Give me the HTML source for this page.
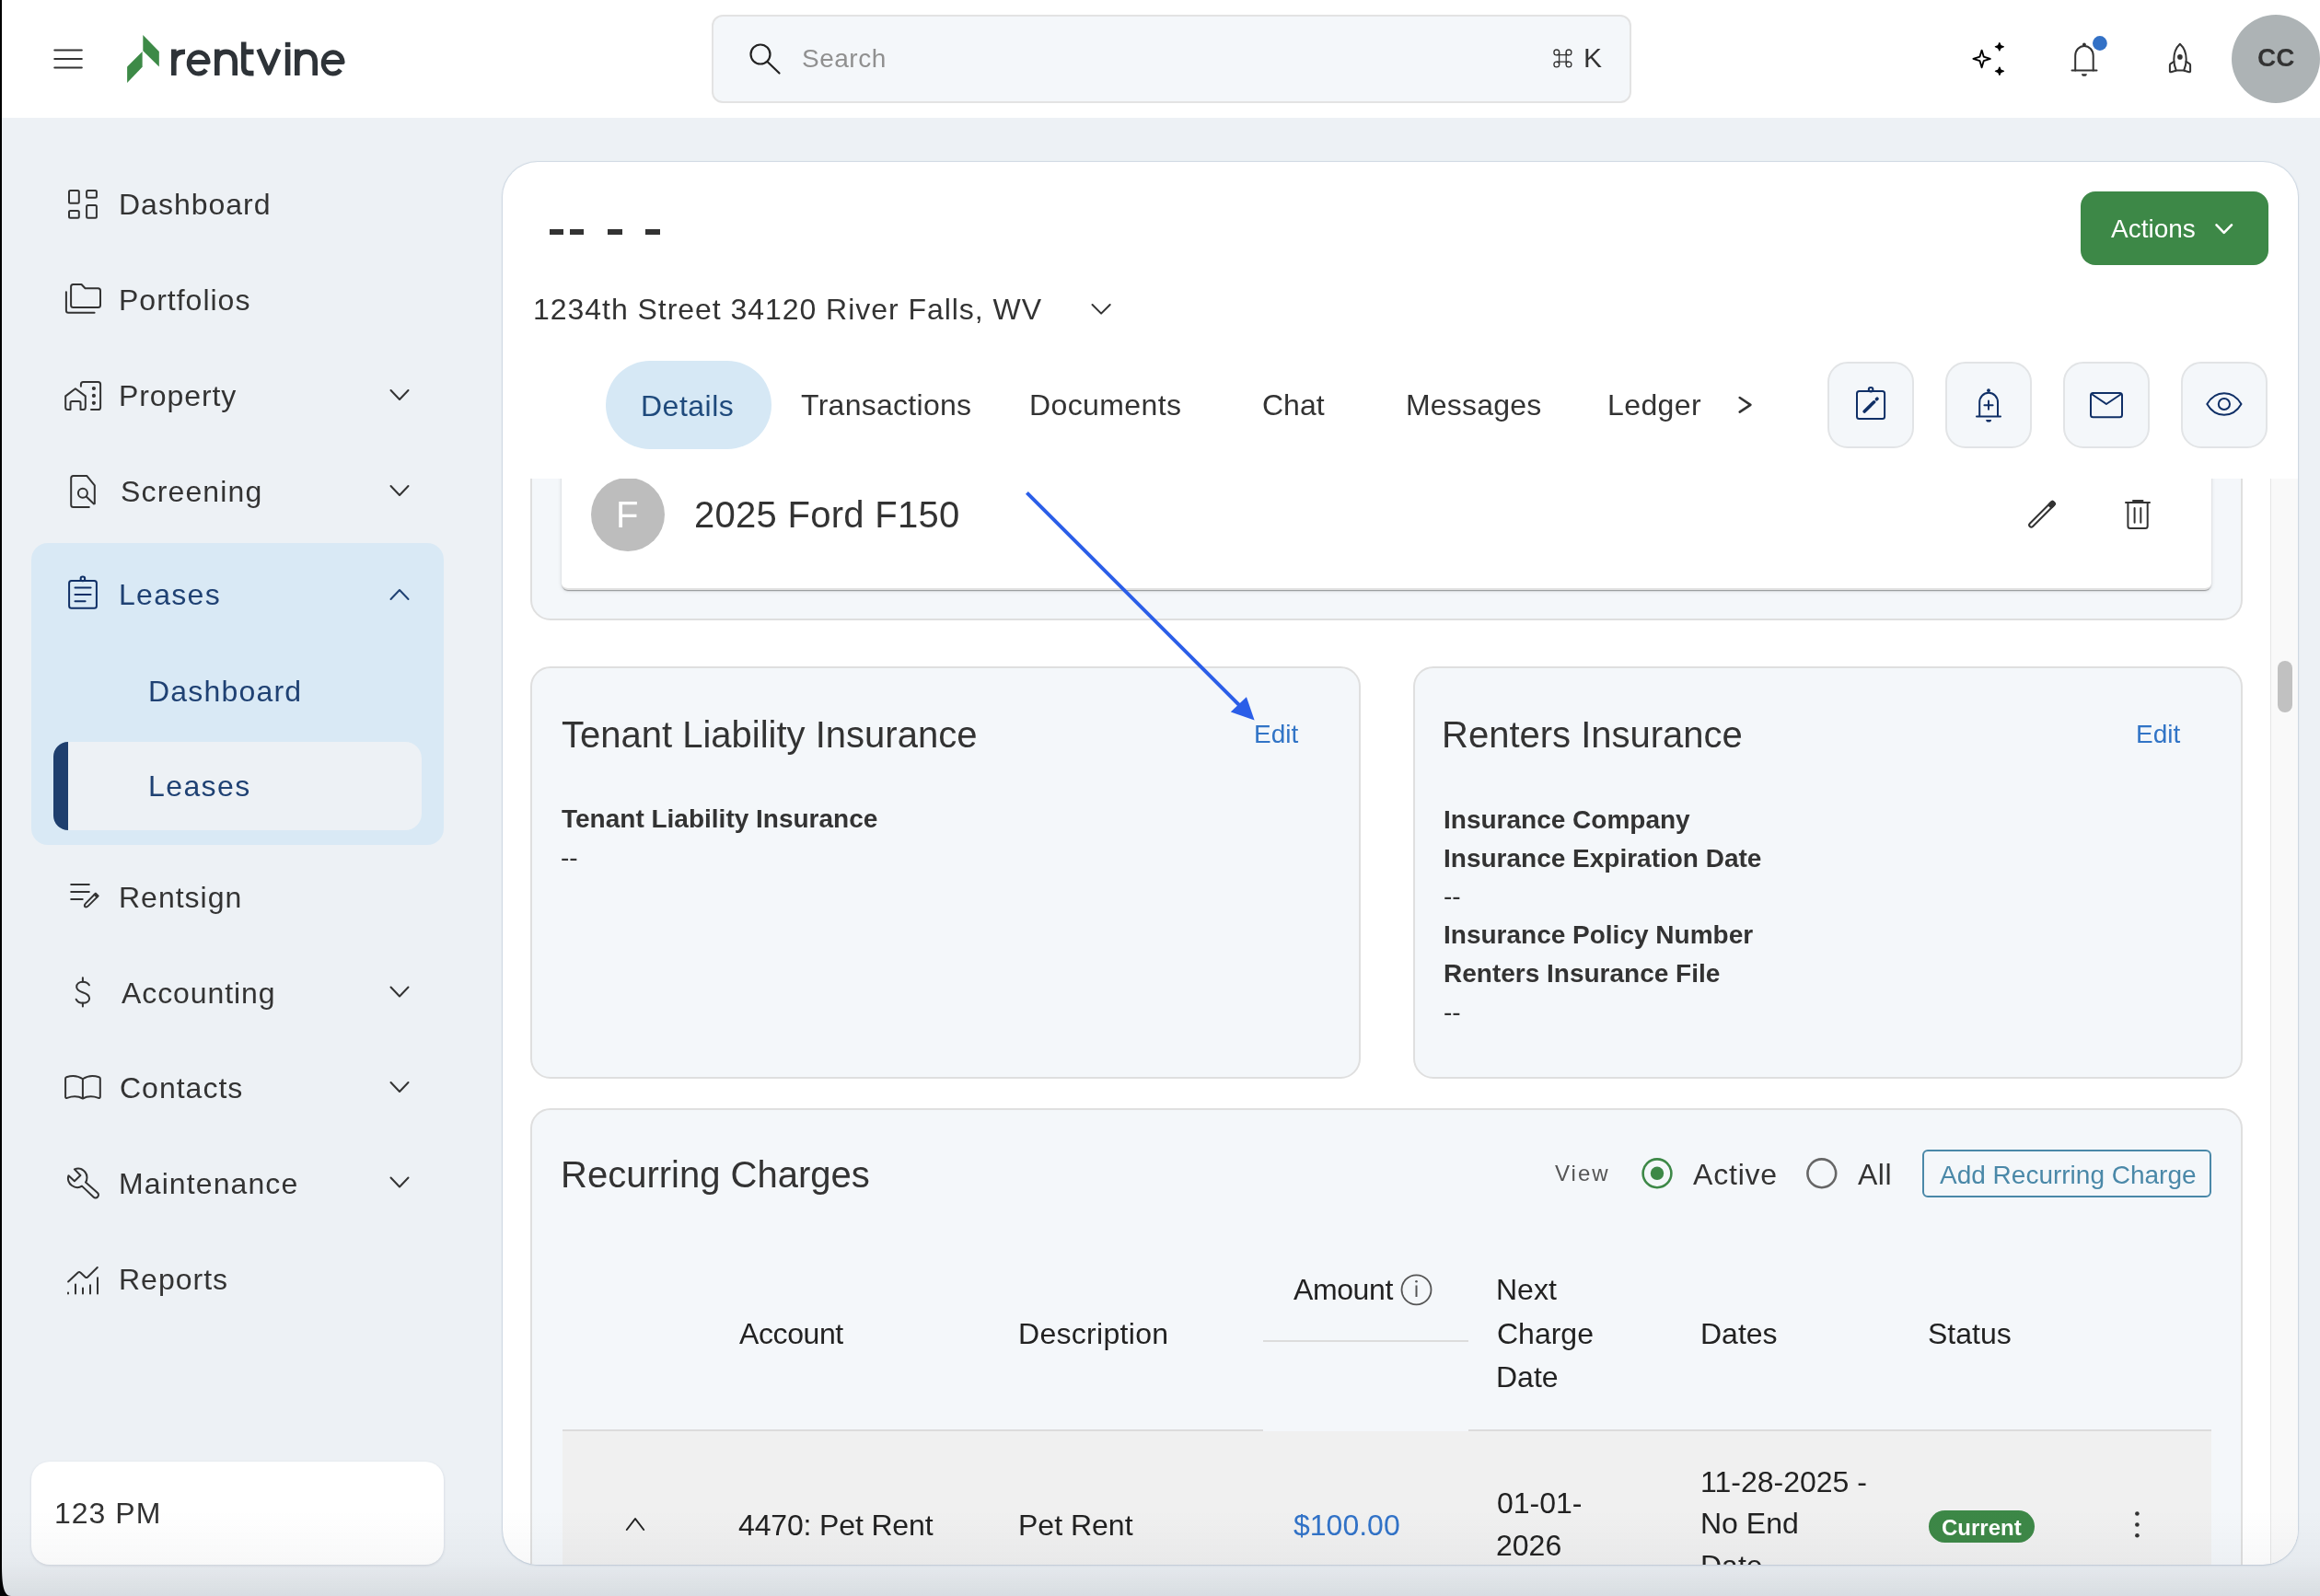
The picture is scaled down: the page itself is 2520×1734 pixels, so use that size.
<!DOCTYPE html>
<html><head><meta charset="utf-8"><title>Rentvine</title>
<style>
html,body{margin:0;padding:0;}
body{width:2520px;height:1734px;position:relative;overflow:hidden;background:#edf1f5;
font-family:"Liberation Sans",sans-serif;}
.t{position:absolute;white-space:nowrap;line-height:1;will-change:transform;}
svg{position:absolute;overflow:visible;}
</style></head><body>

<div style="position:absolute;left:0px;top:0px;width:2520px;height:128px;background:#fff;"></div>
<div style="position:absolute;left:773px;top:16px;width:999px;height:96px;box-sizing:border-box;border:2px solid #e3e3e3;background:#f4f7fa;border-radius:12px;"></div>
<div style="position:absolute;left:34px;top:590px;width:448px;height:328px;background:#d9e9f5;border-radius:18px;"></div>
<div style="position:absolute;left:58px;top:806px;width:400px;height:96px;background:#edf1f5;border-radius:18px;overflow:hidden;"></div>
<div style="position:absolute;left:58px;top:806px;width:16px;height:96px;background:#1f3f6e;border-radius:18px 0 0 18px;"></div>
<div style="position:absolute;left:34px;top:1588px;width:448px;height:112px;background:#fff;border-radius:20px;box-shadow:0 1px 3px rgba(60,80,110,.18);"></div>
<div class="t" style="left:129.4px;top:205.9px;font-size:32px;color:#333;font-weight:400;letter-spacing:1.0px;">Dashboard</div>
<div class="t" style="left:129.4px;top:309.9px;font-size:32px;color:#333;font-weight:400;letter-spacing:1.0px;">Portfolios</div>
<div class="t" style="left:129.4px;top:413.9px;font-size:32px;color:#333;font-weight:400;letter-spacing:0.9px;">Property</div>
<div class="t" style="left:130.5px;top:517.9px;font-size:32px;color:#333;font-weight:400;letter-spacing:1.15px;">Screening</div>
<div class="t" style="left:129.4px;top:958.9px;font-size:32px;color:#333;font-weight:400;letter-spacing:1.0px;">Rentsign</div>
<div class="t" style="left:131.9px;top:1062.9px;font-size:32px;color:#333;font-weight:400;letter-spacing:0.9px;">Accounting</div>
<div class="t" style="left:130.4px;top:1166.4px;font-size:32px;color:#333;font-weight:400;letter-spacing:1.0px;">Contacts</div>
<div class="t" style="left:129.4px;top:1269.9px;font-size:32px;color:#333;font-weight:400;letter-spacing:1.1px;">Maintenance</div>
<div class="t" style="left:129.4px;top:1373.9px;font-size:32px;color:#333;font-weight:400;letter-spacing:1.0px;">Reports</div>
<div class="t" style="left:128.9px;top:629.9px;font-size:32px;color:#1f4173;font-weight:400;letter-spacing:1.3px;">Leases</div>
<div class="t" style="left:160.9px;top:734.9px;font-size:32px;color:#1f4173;font-weight:400;letter-spacing:1.2px;">Dashboard</div>
<div class="t" style="left:160.9px;top:837.9px;font-size:32px;color:#1f4173;font-weight:400;letter-spacing:1.4px;">Leases</div>
<div class="t" style="left:58.6px;top:1627.9px;font-size:32px;color:#333;font-weight:400;letter-spacing:1.0px;">123 PM</div>
<div style="position:absolute;left:546px;top:176px;width:1950px;height:1524px;background:#fff;border-radius:38px;box-shadow:0 0 1px 1px rgba(120,145,175,.22),0 1px 3px rgba(120,145,175,.18);"></div>
<div style="position:absolute;left:596.9px;top:249.3px;width:15.200000000000045px;height:5.5px;background:#333;"></div>
<div style="position:absolute;left:619.1px;top:249.3px;width:15.399999999999977px;height:5.5px;background:#333;"></div>
<div style="position:absolute;left:660.1px;top:249.3px;width:15.799999999999955px;height:5.5px;background:#333;"></div>
<div style="position:absolute;left:701px;top:249.3px;width:15.899999999999977px;height:5.5px;background:#333;"></div>
<div class="t" style="left:578.6px;top:319.9px;font-size:32px;color:#333;font-weight:400;letter-spacing:0.96px;">1234th Street 34120 River Falls, WV</div>
<div style="position:absolute;left:658px;top:392px;width:180px;height:96px;background:#d6e8f5;border-radius:48px;"></div>
<div class="t" style="left:696.4px;top:424.6px;font-size:32px;color:#1f4a7c;font-weight:400;letter-spacing:0.5px;">Details</div>
<div class="t" style="left:870.1px;top:424.1px;font-size:32px;color:#333;font-weight:400;letter-spacing:0.28px;">Transactions</div>
<div class="t" style="left:1118.2px;top:424.1px;font-size:32px;color:#333;font-weight:400;letter-spacing:0.4px;">Documents</div>
<div class="t" style="left:1371.0px;top:424.1px;font-size:32px;color:#333;font-weight:400;letter-spacing:0px;">Chat</div>
<div class="t" style="left:1527.4px;top:424.1px;font-size:32px;color:#333;font-weight:400;letter-spacing:0.2px;">Messages</div>
<div class="t" style="left:1746.4px;top:424.1px;font-size:32px;color:#333;font-weight:400;letter-spacing:0.4px;">Ledger</div>
<div style="position:absolute;left:2260px;top:208px;width:204px;height:80px;background:#3d8847;border-radius:16px;"></div>
<div class="t" style="left:2292.9px;top:234.6px;font-size:28px;color:#fff;font-weight:400;letter-spacing:0px;">Actions</div>
<div style="position:absolute;left:1985px;top:392.7px;width:94px;height:94.30000000000001px;box-sizing:border-box;border:2px solid #e2e4e6;background:#f4f7fa;border-radius:22px;"></div>
<div style="position:absolute;left:2112.8px;top:392.7px;width:94.0px;height:94.30000000000001px;box-sizing:border-box;border:2px solid #e2e4e6;background:#f4f7fa;border-radius:22px;"></div>
<div style="position:absolute;left:2240.7px;top:392.7px;width:94.0px;height:94.30000000000001px;box-sizing:border-box;border:2px solid #e2e4e6;background:#f4f7fa;border-radius:22px;"></div>
<div style="position:absolute;left:2368.6px;top:392.7px;width:94.0px;height:94.30000000000001px;box-sizing:border-box;border:2px solid #e2e4e6;background:#f4f7fa;border-radius:22px;"></div>
<div style="position:absolute;left:546px;top:520px;width:1950px;height:1180px;overflow:hidden;border-radius:0 0 38px 38px;">
<div style="position:absolute;left:30px;top:-220px;width:1860px;height:374px;box-sizing:border-box;border:2px solid #dfdfdf;background:#f4f7fa;border-radius:22px;"></div>
<div style="position:absolute;left:64px;top:-220px;width:1792px;height:341px;background:#fff;border-radius:7px;border-bottom:2px solid #e2e2e2;box-sizing:border-box;box-shadow:0 2px 1px -1px rgba(0,0,0,.28),0 1px 2px 0 rgba(0,0,0,.12),0 1px 5px 0 rgba(0,0,0,.10);"></div>
<div style="position:absolute;left:96px;top:-1px;width:80px;height:80px;background:#bdbdbd;border-radius:50%;"></div>
<div class="t" style="left:122.7px;top:19.4px;font-size:40px;color:#fff;font-weight:400;letter-spacing:0px;">F</div>
<div class="t" style="left:208.0px;top:19.4px;font-size:40px;color:#333;font-weight:400;letter-spacing:0.28px;">2025 Ford F150</div>
<div style="position:absolute;left:30px;top:203.5px;width:902px;height:448.5px;box-sizing:border-box;border:2px solid #dfdfdf;background:#f4f7fa;border-radius:22px;"></div>
<div style="position:absolute;left:989px;top:203.5px;width:901px;height:448.5px;box-sizing:border-box;border:2px solid #dfdfdf;background:#f4f7fa;border-radius:22px;"></div>
<div class="t" style="left:63.7px;top:257.5px;font-size:40px;color:#333;font-weight:400;letter-spacing:0px;">Tenant Liability Insurance</div>
<div class="t" style="left:816.0px;top:263.7px;font-size:28px;color:#3174c6;font-weight:400;letter-spacing:0px;">Edit</div>
<div class="t" style="left:64.3px;top:356.1px;font-size:28px;color:#333;font-weight:700;letter-spacing:0px;">Tenant Liability Insurance</div>
<div class="t" style="left:63.4px;top:397.8px;font-size:28px;color:#333;font-weight:400;letter-spacing:0px;">--</div>
<div class="t" style="left:1020.2px;top:257.8px;font-size:40px;color:#333;font-weight:400;letter-spacing:0px;">Renters Insurance</div>
<div class="t" style="left:1774.3px;top:263.7px;font-size:28px;color:#3174c6;font-weight:400;letter-spacing:0px;">Edit</div>
<div class="t" style="left:1021.6px;top:357.0px;font-size:28px;color:#333;font-weight:700;letter-spacing:0px;">Insurance Company</div>
<div class="t" style="left:1021.6px;top:398.6px;font-size:28px;color:#333;font-weight:700;letter-spacing:0px;">Insurance Expiration Date</div>
<div class="t" style="left:1022.3px;top:440.3px;font-size:28px;color:#333;font-weight:400;letter-spacing:0px;">--</div>
<div class="t" style="left:1021.6px;top:482.3px;font-size:28px;color:#333;font-weight:700;letter-spacing:0px;">Insurance Policy Number</div>
<div class="t" style="left:1021.6px;top:524.3px;font-size:28px;color:#333;font-weight:700;letter-spacing:0px;">Renters Insurance File</div>
<div class="t" style="left:1022.3px;top:566.3px;font-size:28px;color:#333;font-weight:400;letter-spacing:0px;">--</div>
<div style="position:absolute;left:30px;top:683.5px;width:1860px;height:596.5px;box-sizing:border-box;border:2px solid #dfdfdf;background:#f4f7fa;border-radius:22px;"></div>
<div class="t" style="left:62.6px;top:735.5px;font-size:40px;color:#333;font-weight:400;letter-spacing:0px;">Recurring Charges</div>
<div class="t" style="left:1143.4px;top:743.1px;font-size:24px;color:#555;font-weight:400;letter-spacing:2px;">View</div>
<div class="t" style="left:1292.9px;top:739.6px;font-size:32px;color:#333;font-weight:400;letter-spacing:0.8px;">Active</div>
<div class="t" style="left:1471.9px;top:739.6px;font-size:32px;color:#333;font-weight:400;letter-spacing:0.5px;">All</div>
<div style="position:absolute;left:1541.8px;top:728.8px;width:313.9000000000001px;height:52.60000000000002px;box-sizing:border-box;border:2px solid #4a88a8;border-radius:6px;"></div>
<div class="t" style="left:1560.7px;top:743.0px;font-size:28px;color:#4a88a8;font-weight:400;letter-spacing:0px;">Add Recurring Charge</div>
<div class="t" style="left:256.9px;top:913.3px;font-size:32px;color:#222;font-weight:400;letter-spacing:-0.4px;">Account</div>
<div class="t" style="left:559.9px;top:913.3px;font-size:32px;color:#222;font-weight:400;letter-spacing:0.3px;">Description</div>
<div class="t" style="left:858.9px;top:864.7px;font-size:32px;color:#222;font-weight:400;letter-spacing:-0.4px;">Amount</div>
<div class="t" style="left:1079.4px;top:865.2px;font-size:32px;color:#222;font-weight:400;letter-spacing:0px;">Next</div>
<div class="t" style="left:1080.4px;top:912.7px;font-size:32px;color:#222;font-weight:400;letter-spacing:0px;">Charge</div>
<div class="t" style="left:1079.4px;top:960.1px;font-size:32px;color:#222;font-weight:400;letter-spacing:0px;">Date</div>
<div class="t" style="left:1301.2px;top:912.7px;font-size:32px;color:#222;font-weight:400;letter-spacing:0px;">Dates</div>
<div class="t" style="left:1547.5px;top:912.7px;font-size:32px;color:#222;font-weight:400;letter-spacing:0px;">Status</div>
<div style="position:absolute;left:826px;top:936.4px;width:223px;height:2.0px;background:#dcdcdc;"></div>
<div style="position:absolute;left:65px;top:1032.6px;width:761px;height:2.0px;background:#dcdcdc;"></div>
<div style="position:absolute;left:1049px;top:1032.6px;width:807px;height:2.0px;background:#dcdcdc;"></div>
<div style="position:absolute;left:65px;top:1034.6px;width:1791px;height:245.4000000000001px;background:#f0f0f0;"></div>
<div class="t" style="left:256.3px;top:1120.5px;font-size:32px;color:#222;font-weight:400;letter-spacing:-0.15px;">4470: Pet Rent</div>
<div class="t" style="left:559.7px;top:1120.5px;font-size:32px;color:#222;font-weight:400;letter-spacing:0px;">Pet Rent</div>
<div class="t" style="left:858.5px;top:1120.5px;font-size:32px;color:#3273c8;font-weight:400;letter-spacing:0px;">$100.00</div>
<div class="t" style="left:1079.8px;top:1097.2px;font-size:32px;color:#222;font-weight:400;letter-spacing:0px;">01-01-</div>
<div class="t" style="left:1079.4px;top:1142.7px;font-size:32px;color:#222;font-weight:400;letter-spacing:0px;">2026</div>
<div class="t" style="left:1301.2px;top:1073.6px;font-size:32px;color:#222;font-weight:400;letter-spacing:0px;">11-28-2025 -</div>
<div class="t" style="left:1301.0px;top:1119.1px;font-size:32px;color:#222;font-weight:400;letter-spacing:0px;">No End</div>
<div class="t" style="left:1301.0px;top:1164.6px;font-size:32px;color:#222;font-weight:400;letter-spacing:0px;">Date</div>
<div style="position:absolute;left:1549px;top:1121.4px;width:114.70000000000005px;height:35.09999999999991px;background:#3d8847;border-radius:18px;"></div>
<div class="t" style="left:1562.5px;top:1128.0px;font-size:24px;color:#fff;font-weight:700;letter-spacing:0px;">Current</div>
<div style="position:absolute;left:1920px;top:0px;width:30px;height:1180px;background:#f9f9f9;border-left:1px solid #e6e6e6;box-sizing:border-box;"></div>
<div style="position:absolute;left:1928px;top:198px;width:16px;height:56px;background:#c1c1c1;border-radius:8px;"></div>
</div>
<svg width="2520" height="1734" style="left:0;top:0;"><g stroke="#333" stroke-width="2.1" stroke-linecap="round"><path d="M59.3 54.5H88.8M59.3 64H88.8M59.3 73.5H88.8"/></g><g fill="#3d8a47"><path d="M155.3 37.9L172.8 56.1V72.4L155.3 55.3Z"/><path d="M154.6 56V72.8L138.1 89.9V72.4Z"/></g><g fill="none" stroke="#2e3338" stroke-width="5.6" stroke-linecap="butt" stroke-linejoin="round"><path d="M188.8 82V53.5M188.8 67C188.8 59.5 193.5 56.3 201 56.3"/><path d="M205 67.4H226.1A10.45 11.7 0 1 0 223.8 75.8" stroke-width="5"/><path d="M235.8 82V53.5M235.8 67C235.8 60 240 56.3 245.5 56.3C251.5 56.3 255.2 60 255.2 67V82"/><path d="M264.7 45.5V73C264.7 77.6 267 79.6 270.8 79.6H275.5M261.9 56.4H275.5" /><path d="M281 53.5L291.85 79L302.7 53.5"/><path d="M312.6 82V53.5"/><path d="M312.6 45.8V51.2"/><path d="M322.8 82V53.5M322.8 67C322.8 60 327 56.3 332.5 56.3C338.5 56.3 342.2 60 342.2 67V82"/><path d="M351 67.4H372.1A10.45 11.7 0 1 0 369.8 75.8" stroke-width="5"/></g><g fill="none" stroke="#222" stroke-width="2.2" stroke-linecap="round"><circle cx="826" cy="59" r="10.5"/><path d="M834 67.5L846.5 79.5"/></g><g fill="none" stroke="#333" stroke-width="1.3"><path d="M1693.6 56.9V70.1M1701.2 56.9V70.1M1690.8 59.7H1704M1690.8 67.1H1704"/><circle cx="1690.8" cy="56.9" r="2.9"/><circle cx="1704" cy="56.9" r="2.9"/><circle cx="1690.8" cy="70" r="2.9"/><circle cx="1704" cy="70" r="2.9"/></g><path d="M2152.6 54.6L2154.7 61.6L2161.8 63.9L2154.7 66.2L2152.6 73.3L2150.5 66.2L2143.4 63.9L2150.5 61.6Z" fill="none" stroke="#000" stroke-width="1.9" stroke-linejoin="round"/><path d="M2171.8 46.6L2173.1 49.5L2176.4 50.8L2173.1 52.1L2171.8 55L2170.5 52.1L2167.3 50.8L2170.5 49.5Z" fill="#000" stroke="#000" stroke-width="1.2" stroke-linejoin="round"/><path d="M2171.9 73.1L2173.2 76L2176.5 77.3L2173.2 78.6L2171.9 81.4L2170.6 78.6L2167.4 77.3L2170.6 76Z" fill="#000" stroke="#000" stroke-width="1.2" stroke-linejoin="round"/><g fill="none" stroke="#333" stroke-width="2" stroke-linecap="round" stroke-linejoin="round"><path d="M2254.2 76.5V60.5A9.7 10.5 0 0 1 2273.7 60.5V76.5"/><path d="M2250.5 76.5H2277.5"/></g><circle cx="2263.9" cy="48.3" r="1.9" fill="#333"/><path d="M2261 80.2A2.9 2.6 0 0 0 2266.8 80.2Z" fill="#333"/><circle cx="2280.9" cy="47" r="7.9" fill="#3371c6"/><g fill="none" stroke="#333" stroke-width="2" stroke-linecap="round" stroke-linejoin="round"><path d="M2367.9 47.8C2363 52.5 2361.3 58 2361.3 64.5C2361.3 69.5 2362.3 73 2363.8 76.6H2372.1C2373.6 73 2374.7 69.5 2374.7 64.5C2374.7 58 2373 52.5 2367.9 47.8Z"/><path d="M2361.4 66.8L2357.6 69.3C2357 69.8 2356.9 70.2 2356.9 70.8V77.5C2356.9 78.2 2357.5 78.5 2358.2 78.2L2363.5 76.8"/><path d="M2374.6 66.8L2378.4 69.3C2379 69.8 2379.1 70.2 2379.1 70.8V77.5C2379.1 78.2 2378.5 78.5 2377.8 78.2L2372.5 76.8"/></g><circle cx="2367.9" cy="61.9" r="2.8" fill="#333"/><circle cx="2472" cy="64" r="48" fill="#adb3b5"/><g fill="none" stroke="#333" stroke-width="2" stroke-linecap="round" stroke-linejoin="round"><rect x="75" y="207" width="10.8" height="13.8" rx="1.5"/><rect x="94.1" y="207" width="10.8" height="7.7" rx="1.5"/><rect x="75" y="229" width="10.8" height="7.7" rx="1.5"/><rect x="94.1" y="223" width="10.8" height="13.8" rx="1.5"/><path d="M77.1 311.5C77.1 310 78 309 79.5 309H88.5L92.5 313.2H106.5C108 313.2 109 314.2 109 315.7V331.5C109 333 108 334 106.5 334H79.5C78 334 77.1 333 77.1 331.5Z"/><path d="M71.9 317.3V337.2C71.9 338.7 72.8 339.7 74.3 339.7H102.6"/><path d="M71.2 430.4L81.9 422.3L92.8 430.4V442.5C92.8 444 91.8 445 90.3 445H87.5V437.7C87.5 436.7 86.7 436 85.7 436H78.3C77.3 436 76.5 436.7 76.5 437.7V445H73.7C72.2 445 71.2 444 71.2 442.5Z"/><circle cx="101.9" cy="422" r="1.1"/><circle cx="101.9" cy="429.9" r="1.1"/><circle cx="101.9" cy="437.8" r="1.1"/><path d="M87.9 419.8V417.6C87.9 416 88.9 415 90.4 415H106.6C108.1 415 109.1 416 109.1 417.6V442.4C109.1 444 108.1 445 106.6 445H99"/><path d="M96.8 550.9H79.7C78.2 550.9 77.2 549.9 77.2 548.4V519.6C77.2 518.1 78.2 517.1 79.7 517.1H94.4L102.8 527.3V547.2"/><circle cx="89.9" cy="535.8" r="5"/><path d="M93.7 539.6L102 547.4"/><path d="M77.2 961H96.8M77.2 968.9H96.8M77.2 977H89.7"/><path d="M105.5 974.6L96.2 983.9C95.4 984.7 94.4 985.5 93.2 985.5C92.3 985.5 91.8 985 91.8 984.1C91.8 982.9 92.6 981.9 93.4 981.1L102.7 971.8Z"/><path d="M102.7 971.8L103.9 970.6L106.7 973.4L105.5 974.6Z" fill="#333"/><path d="M89.9 1062.3V1066.8M89.9 1089.5V1093.5"/><path d="M96.9 1070.3C95.4 1067.9 92.9 1066.8 89.9 1066.8C85.9 1066.8 83.2 1069 83.2 1072.3C83.2 1075.7 86.2 1077 89.9 1078.2C94 1079.5 97.1 1081 97.1 1084.7C97.1 1087.7 94.2 1089.8 89.9 1089.8C86.5 1089.8 84 1088.3 82.7 1085.7"/><path d="M89.9 1172.3V1193.4M71.1 1171.7V1191.8C71.1 1192.8 72 1193.3 73 1192.9C78.5 1190.9 84.3 1190.6 89.9 1193.5C95.5 1190.6 101.3 1190.9 106.8 1192.9C107.8 1193.3 108.8 1192.8 108.8 1191.8V1171.7C108.8 1171 108.3 1170.4 107.6 1170.2C101.8 1168.3 95.5 1168.3 89.9 1172.3C84.3 1168.3 78 1168.3 72.2 1170.2C71.5 1170.4 71.1 1171 71.1 1171.7Z"/><path d="M80.9 1270.4L87.4 1277L80.9 1283.2L74.5 1277.2C73 1281 74.5 1285.5 78 1288C81.5 1290.5 86 1290.6 89 1288.6L101.5 1300.5C102.8 1301.8 104.8 1301.8 106 1300.5C107.3 1299.2 107.3 1297.2 106 1296L93 1284.6C95 1281.5 95 1276.5 92.5 1273.5C89.5 1270 85 1268.8 80.9 1270.4Z"/><path d="M74.1 1392.5L84.8 1382.6C85.6 1381.9 86.6 1381.9 87.3 1382.6L92.6 1387.5C93.4 1388.2 94.4 1388.2 95.2 1387.5L105.8 1377"/><path d="M74 1404.5V1405.5M82 1395.5V1405.5M90 1399.5V1405.5M98 1396.3V1405.5M106 1388.3V1405.5"/></g><path d="M424.5 424L434 434L443.5 424" fill="none" stroke="#333" stroke-width="2" stroke-linecap="round" stroke-linejoin="round"/><path d="M424.5 528L434 538L443.5 528" fill="none" stroke="#333" stroke-width="2" stroke-linecap="round" stroke-linejoin="round"/><path d="M424.5 1072.5L434 1082.5L443.5 1072.5" fill="none" stroke="#333" stroke-width="2" stroke-linecap="round" stroke-linejoin="round"/><path d="M424.5 1176L434 1186L443.5 1176" fill="none" stroke="#333" stroke-width="2" stroke-linecap="round" stroke-linejoin="round"/><path d="M424.5 1279.5L434 1289.5L443.5 1279.5" fill="none" stroke="#333" stroke-width="2" stroke-linecap="round" stroke-linejoin="round"/><path d="M424.5 651L434 641L443.5 651" fill="none" stroke="#1f4173" stroke-width="2" stroke-linecap="round" stroke-linejoin="round"/><g fill="none" stroke="#0f2f66" stroke-width="2" stroke-linecap="round" stroke-linejoin="round"><rect x="75.1" y="631" width="29.8" height="29.8" rx="2.5"/><circle cx="89.9" cy="628.9" r="2.3"/><path d="M81.5 638.5H98.6M81.5 645.9H98.6M81.5 653.3H92.6"/></g><path d="M1186.5 331L1196.1 340.6L1205.7 331" fill="none" stroke="#333" stroke-width="2" stroke-linecap="round" stroke-linejoin="round"/><path d="M1889.7 432L1901.4 439.8L1889.7 447.6" fill="none" stroke="#333" stroke-width="2.6" stroke-linecap="round" stroke-linejoin="round"/><path d="M2407.5 244.4L2415.7 252.8L2424 244.4" fill="none" stroke="#fff" stroke-width="2.6" stroke-linecap="round" stroke-linejoin="round"/><g fill="none" stroke="#0f2f66" stroke-width="2" stroke-linecap="round" stroke-linejoin="round"><rect x="2017" y="425" width="30.1" height="30" rx="2.5"/><circle cx="2032.1" cy="423.3" r="2.3"/><path d="M2025.2 447L2035.6 436.8" stroke-width="3.6"/><path d="M2038.4 433.8L2039 433.2" stroke-width="3.6"/><path d="M2150.2 452.6V437A9.9 10.3 0 0 1 2170 437V452.6M2147 452.6H2173M2160 435.6V444.8M2155.4 440.2H2164.6"/><rect x="2271" y="427" width="34" height="26.2" rx="2.5"/><path d="M2272.5 428.5L2287.9 439L2303.5 428.5"/><path d="M2397.3 439C2402 431 2408.5 427.2 2415.9 427.2C2423.3 427.2 2429.8 431 2434.5 439C2429.8 447 2423.3 450.8 2415.9 450.8C2408.5 450.8 2402 447 2397.3 439Z"/><circle cx="2415.9" cy="439" r="6.1"/></g><circle cx="2160" cy="424.2" r="1.9" fill="#0f2f66"/><path d="M2157.2 456A2.9 2.6 0 0 0 2163 456Z" fill="#0f2f66"/><g fill="none" stroke="#333" stroke-width="2" stroke-linecap="round" stroke-linejoin="round"><path d="M2309 546H2335M2311.4 547V571.5C2311.4 573 2312.4 574 2313.9 574H2330.2C2331.7 574 2332.7 573 2332.7 571.5V547M2318.6 552V567.8M2325.3 552V567.8M2317 544H2327.5"/></g><g transform="translate(2217.9 558.9) rotate(-45)"><rect x="-18.5" y="-2.25" width="37" height="4.5" rx="2.25" fill="none" stroke="#333" stroke-width="2"/><rect x="11.5" y="-3.25" width="8" height="6.5" rx="2" fill="#333"/></g><circle cx="1800" cy="1274.8" r="15.4" fill="none" stroke="#3d8847" stroke-width="2.6"/><circle cx="1800" cy="1274.8" r="7.2" fill="#3d8847"/><circle cx="1978.8" cy="1274.8" r="15.4" fill="none" stroke="#666" stroke-width="2.6"/><circle cx="1538.5" cy="1401.3" r="16" fill="none" stroke="#555" stroke-width="1.8"/><path d="M1538.5 1396.5V1409" stroke="#555" stroke-width="2"/><circle cx="1538.5" cy="1392.3" r="1.3" fill="#555"/><path d="M680.8 1662L690 1650L699.2 1662" fill="none" stroke="#222" stroke-width="2" stroke-linecap="round" stroke-linejoin="round"/><g fill="#333"><circle cx="2321.4" cy="1644.5" r="2.3"/><circle cx="2321.4" cy="1656.5" r="2.3"/><circle cx="2321.4" cy="1668.3" r="2.3"/></g></svg>
<div class="t" style="left:870.7px;top:50.3px;font-size:28px;color:#909090;font-weight:400;letter-spacing:0.5px;">Search</div>
<div class="t" style="left:1719.5px;top:47.6px;font-size:30px;color:#333;font-weight:400;letter-spacing:0px;">K</div>
<div class="t" style="left:2451.9px;top:49.3px;font-size:28px;color:#333;font-weight:700;letter-spacing:0px;">CC</div>
<svg width="2520" height="1734" style="left:0;top:0;"><path d="M1115.4 535.4L1347 767" stroke="#2b5ee8" stroke-width="4" stroke-linecap="butt"/><path d="M1362.6 782.6L1336.8 773.5L1353.9 757.2Z" fill="#2b5ee8"/></svg>
<div style="position:absolute;left:0px;top:0px;width:2px;height:1734px;background:#000;"></div>
<svg width="2520" height="1734" style="left:0;top:0;"><path d="M0 1700H2C2 1722 4 1734 12 1734H0Z" fill="#000"/></svg>
<div style="position:absolute;left:0;top:1640px;width:2520px;height:94px;background:linear-gradient(to bottom,rgba(40,50,60,0) 0%,rgba(40,50,60,.03) 60%,rgba(40,50,60,.10) 100%);"></div>
</body></html>
